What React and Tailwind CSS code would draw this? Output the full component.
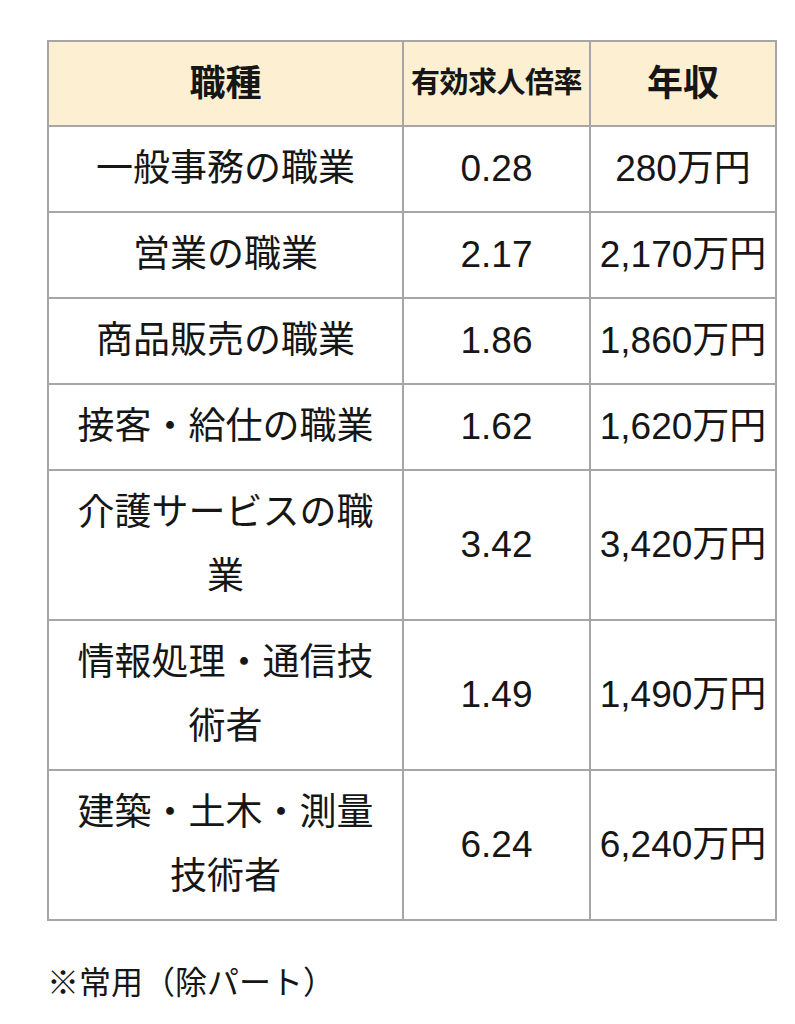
import React from 'react';

const rows = [
    { job: '一般事務の職業', rate: '0.28', pay: '280万円' },
    { job: '営業の職業', rate: '2.17', pay: '2,170万円' },
    { job: '商品販売の職業', rate: '1.86', pay: '1,860万円' },
    { job: '接客・給仕の職業', rate: '1.62', pay: '1,620万円' },
    { job: '介護サービスの職業', rate: '3.42', pay: '3,420万円' },
    { job: '情報処理・通信技術者', rate: '1.49', pay: '1,490万円' },
    { job: '建築・土木・測量技術者', rate: '6.24', pay: '6,240万円' },
];

const App = () => {
    return (
        <div className="min-h-screen bg-white pl-[47px] pt-[40px] text-[#161616] [font-family:'Liberation_Sans','Noto_Sans_CJK_JP',sans-serif]">
            <table className="w-[728px] table-fixed border-collapse border-2 border-[#a6a6a6]">
                <colgroup>
                    <col className="w-[355px]" />
                    <col className="w-[187px]" />
                    <col className="w-[186px]" />
                </colgroup>
                <thead>
                    <tr className="h-[85px] bg-[#fcefd2]">
                        <th className="border-2 border-[#a6a6a6] text-center text-[36px] font-bold">職種</th>
                        <th className="border-2 border-[#a6a6a6] px-0 text-center text-[29px] font-bold tracking-[-0.5px]">有効求人倍率</th>
                        <th className="border-2 border-[#a6a6a6] text-center text-[36px] font-bold">年収</th>
                    </tr>
                </thead>
                <tbody>
                    {rows.map((row) => (
                        <tr key={row.job}>
                            <td className="border-2 border-[#a6a6a6] px-[24px] py-[10px] text-center text-[37px] leading-[64px]">
                                {row.job}
                            </td>
                            <td className="border-2 border-[#a6a6a6] text-center text-[37px] leading-[64px]">{row.rate}</td>
                            <td className="whitespace-nowrap border-2 border-[#a6a6a6] px-0 text-center text-[37px] leading-[64px]">
                                {row.pay}
                            </td>
                        </tr>
                    ))}
                </tbody>
            </table>
            <p className="mt-[40px] text-[32px] leading-[44px]">※常用（除パート）</p>
        </div>
    );
};

export default App;
